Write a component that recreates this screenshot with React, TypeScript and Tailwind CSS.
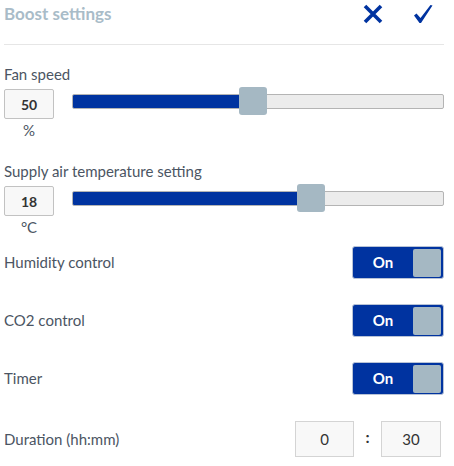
const font = { fontFamily: '"Source Sans Pro", Lato, "Liberation Sans", sans-serif' }

const Slider = ({ value, max }: { value: number; max: number }) => {
  const pct = (value / max) * 100
  return (
    <div className="relative h-[28px] flex-1 ml-[18px] -mt-[2px]">
      <div className="absolute left-0 right-0 top-[7px] h-[15px] rounded-[2px] border border-[#b4b4b4] bg-[#ececec] overflow-hidden">
        <div className="h-full bg-[#0033a0]" style={{ width: `${pct}%` }} />
      </div>
      <div
        className="absolute top-0 h-[28px] w-[28px] rounded-[3px] bg-[#a5b8c3]"
        style={{ left: `calc(${pct}% - 2px)` }}
      />
    </div>
  )
}

const ValueRow = ({ label, value, unit, pct }: { label: string; value: string; unit: string; pct: number }) => (
  <div>
    <div className="text-[15px] leading-[20px] text-[#4b5563]">{label}</div>
    <div className="flex items-start mt-[5px]">
      <div className="w-[50px] flex flex-col items-center">
        <div className="w-[50px] h-[30px] flex items-center justify-center border border-[#c2c2c2] bg-[#f8f8f8] rounded-[2px] text-[14px] font-bold text-[#333]">
          {value}
        </div>
        <div className="text-[15px] leading-[20px] text-[#4b5563] mt-[1px]">{unit}</div>
      </div>
      <Slider value={pct} max={100} />
    </div>
  </div>
)

const Toggle = () => (
  <div className="w-[92px] h-[33px] rounded-[3px] bg-[#0033a0] border border-[#b8c3d6] flex items-center">
    <div className="flex-1 text-center text-white font-bold text-[15px]">On</div>
    <div className="w-[28px] h-[28px] mr-[2px] rounded-[2px] bg-[#a5b8c3]" />
  </div>
)

const ToggleRow = ({ label }: { label: string }) => (
  <div className="flex items-center justify-between h-[33px]">
    <span className="text-[15px] text-[#4b5563]">{label}</span>
    <Toggle />
  </div>
)

export default function App() {
  return (
    <div className="w-[454px] h-[466px] bg-white pl-[4px] pr-[10px]" style={font}>
      <div className="h-[45px] flex items-center justify-between border-b border-[#e6e6e6]">
        <span className="text-[17px] font-bold text-[#a9bcc8] -mt-[16px]">Boost settings</span>
        <div className="flex items-center gap-[30px] mr-[11px] -mt-[16px]">
          <svg width="20" height="20" viewBox="0 0 20 20">
            <path d="M2 2 L18 18 M18 2 L2 18" stroke="#0033a0" strokeWidth="3.6" />
          </svg>
          <svg width="20" height="20" viewBox="0 0 20 20">
            <path d="M1 11.5 L3.5 9.5 L7.5 14 L17.5 1 L19.5 1.5 L8 19 L6.5 19 Z" fill="#0033a0" />
          </svg>
        </div>
      </div>

      <div className="mt-[19px]">
        <ValueRow label="Fan speed" value="50" unit="%" pct={45.5} />
      </div>
      <div className="mt-[21px]">
        <ValueRow label="Supply air temperature setting" value="18" unit="°C" pct={61} />
      </div>

      <div className="mt-[9px] flex flex-col gap-[25px]">
        <ToggleRow label="Humidity control" />
        <ToggleRow label="CO2 control" />
        <ToggleRow label="Timer" />
      </div>

      <div className="mt-[26px] flex items-center justify-between">
        <span className="text-[15px] text-[#4b5563]">Duration (hh:mm)</span>
        <div className="flex items-center mr-[3px]">
          <div className="w-[59px] h-[36px] flex items-center justify-center border border-[#d4d4d4] bg-[#f8f8f8] text-[15px] text-[#333]">0</div>
          <span className="w-[27px] text-center font-bold text-[16px] text-[#333] -mt-[4px]">:</span>
          <div className="w-[60px] h-[36px] flex items-center justify-center border border-[#d4d4d4] bg-[#f8f8f8] text-[15px] text-[#333]">30</div>
        </div>
      </div>
    </div>
  )
}
